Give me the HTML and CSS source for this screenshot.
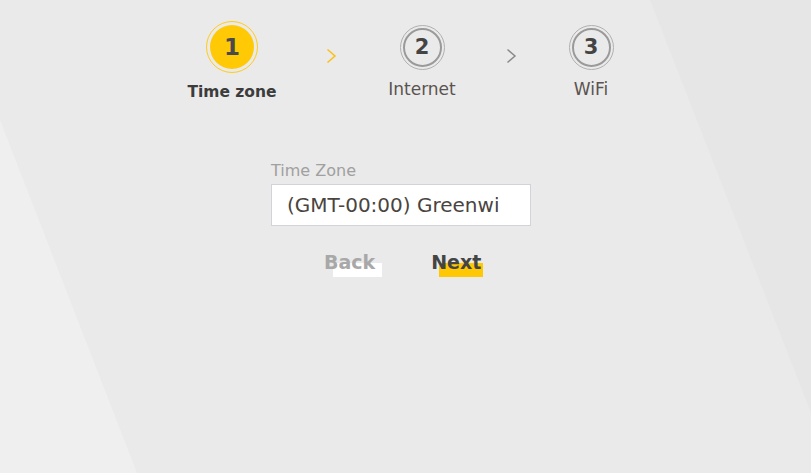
FILE: index.html
```html
<!DOCTYPE html>
<html lang="en">
<head>
    <meta charset="UTF-8">
    <meta name="viewport" content="width=device-width, initial-scale=1.0">
    <title>Setup Wizard</title>
    <link rel="stylesheet" href="styles.css">
</head>
<body>
    <div class="wizard">
        <div class="steps">
            <div class="step active">
                <div class="ring"><div class="dot">1</div></div>
                <div class="step-label">Time zone</div>
            </div>
            <div class="arrow active">
                <svg width="11" height="16" viewBox="0 0 11 16"><polyline points="1.5,1.5 9,8 1.5,14.5" fill="none" stroke="currentColor" stroke-width="1.5"/></svg>
            </div>
            <div class="step">
                <div class="ring"><div class="dot">2</div></div>
                <div class="step-label">Internet</div>
            </div>
            <div class="arrow">
                <svg width="11" height="16" viewBox="0 0 11 16"><polyline points="1.5,1.5 9,8 1.5,14.5" fill="none" stroke="currentColor" stroke-width="1.5"/></svg>
            </div>
            <div class="step">
                <div class="ring"><div class="dot">3</div></div>
                <div class="step-label">WiFi</div>
            </div>
        </div>

        <div class="form">
            <label class="field-label">Time Zone</label>
            <div class="select-box"><span class="select-text">(GMT-00:00) Greenwi</span></div>
            <div class="actions">
                <button class="btn back">Back</button>
                <button class="btn next">Next</button>
            </div>
        </div>
    </div>
</body>
</html>
```

FILE: styles.css
```css
html, body {
    margin: 0;
    padding: 0;
}
body {
    font-family: "DejaVu Sans", Arial, sans-serif;
    width: 811px;
    height: 473px;
    background: #eaeaea;
    position: relative;
    overflow: hidden;
}
body::before {
    content: "";
    position: absolute;
    inset: 0;
    background: #efefef;
    clip-path: polygon(0 120px, 137px 473px, 0 473px);
}
body::after {
    content: "";
    position: absolute;
    inset: 0;
    background: #e6e6e6;
    clip-path: polygon(650px 0, 811px 0, 811px 413px);
}
.wizard {
    position: relative;
    z-index: 1;
    padding-top: 21px;
}
.steps {
    display: grid;
    grid-template-columns: 120px 78px 104px 74px 86px;
    margin-left: 172px;
    align-items: start;
}
.step {
    display: flex;
    flex-direction: column;
    align-items: center;
}
.ring {
    height: 52px;
    display: flex;
    align-items: center;
    justify-content: center;
}
.step .ring .dot {
    width: 39px;
    height: 39px;
    box-sizing: border-box;
    border-radius: 50%;
    border: 2px solid #9a9a9a;
    outline: 1px solid #b0b0b0;
    outline-offset: 2px;
    display: flex;
    align-items: center;
    justify-content: center;
    font-weight: bold;
    font-size: 21px;
    color: #444;
}
.step.active .ring .dot {
    width: 44px;
    height: 44px;
    border: none;
    background: #ffca05;
    outline: 1px solid #ffcc1a;
    outline-offset: 3px;
    font-size: 23px;
    color: #4a4a4a;
}
.step-label {
    margin-top: 6px;
    font-size: 17px;
    color: #5a5350;
}
.step.active .step-label {
    margin-top: 10px;
    font-size: 15.5px;
    font-weight: bold;
    color: #3c3c3c;
}
.arrow {
    height: 52px;
    display: flex;
    align-items: center;
    justify-content: center;
    padding-top: 18px;
    box-sizing: border-box;
    color: #8a8a8a;
}
.arrow.active {
    color: #fbbf14;
}
.arrow svg {
    display: block;
}
.form {
    margin: 60px 0 0 271px;
    width: 260px;
}
.field-label {
    display: block;
    font-size: 16px;
    color: #a0a0a0;
    line-height: 20px;
}
.select-box {
    margin-top: 3px;
    height: 42px;
    box-sizing: border-box;
    background: #fff;
    border: 1px solid #d2d2d8;
    padding: 0 30px 0 15px;
    display: flex;
    align-items: center;
    overflow: hidden;
    white-space: nowrap;
}
.select-text {
    font-size: 20px;
    color: #4a4440;
}
.actions {
    display: flex;
    margin-top: 24px;
    padding-left: 53px;
    gap: 56px;
}
.btn {
    position: relative;
    background: none;
    border: none;
    padding: 0;
    font-family: inherit;
    font-size: 19px;
    font-weight: bold;
    line-height: 24px;
    cursor: pointer;
}
.btn::before {
    content: "";
    position: absolute;
    left: 9px;
    top: 13px;
    width: 49px;
    height: 14px;
    z-index: -1;
}
.back {
    color: #a8a8a8;
    z-index: 0;
}
.back::before {
    background: #fff;
}
.next {
    color: #444;
    z-index: 0;
}
.next::before {
    left: 8px;
    width: 44px;
    background: #ffc805;
}
```
